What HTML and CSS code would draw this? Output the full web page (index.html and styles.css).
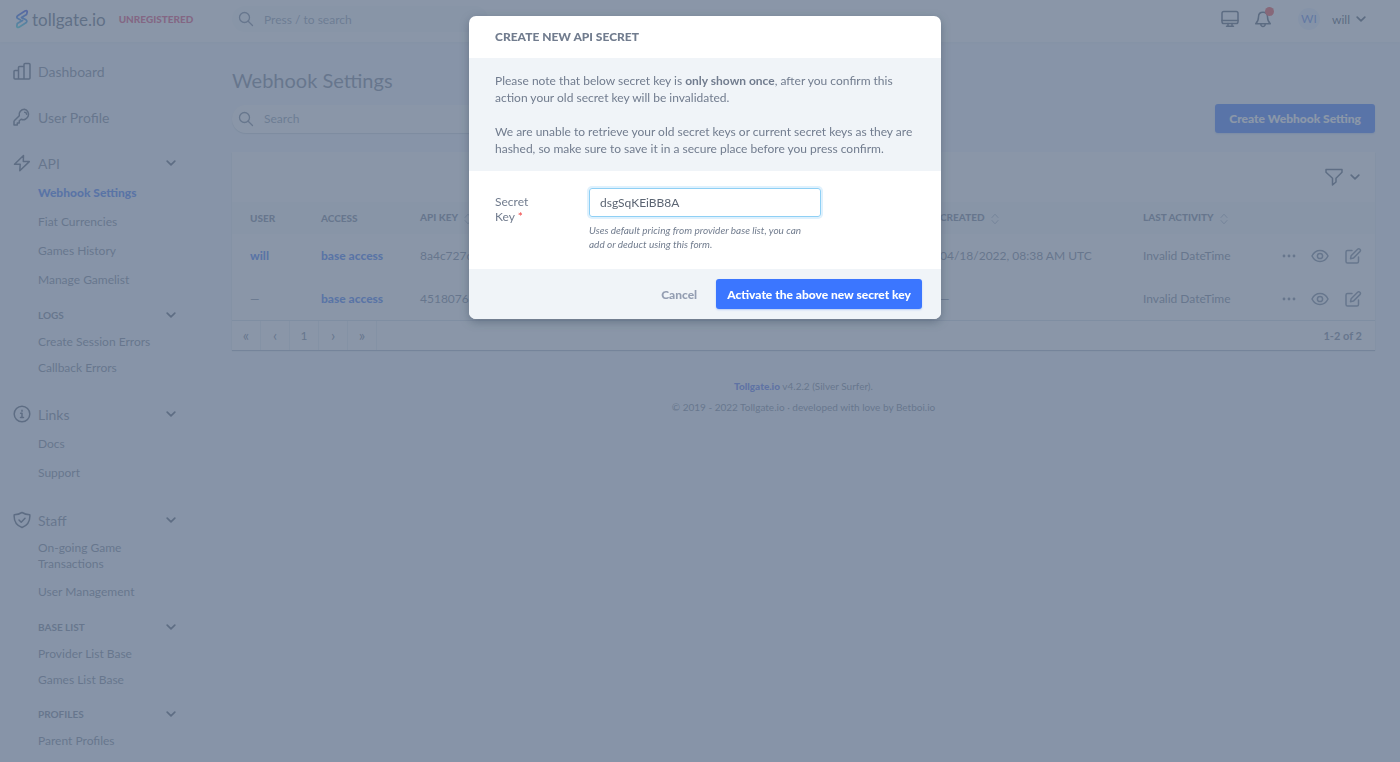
FILE: index.html
```html
<!DOCTYPE html>
<html lang="en">
<head>
    <meta charset="UTF-8">
    <meta name="viewport" content="width=device-width, initial-scale=1.0">
    <title>Webhook Settings</title>
    <link rel="stylesheet" href="styles.css">
</head>
<body>
    <!-- shared icons -->
    <svg class="sprite" aria-hidden="true">
        <symbol id="chevron" viewBox="0 0 10 10"><path d="M1.2 3.2 5 6.8l3.800-3.600"/></symbol>
        <symbol id="search" viewBox="0 0 16 16"><circle cx="6.500" cy="6.500" r="5"/><path d="m10.200 10.200 4.300 4.300"/></symbol>
        <symbol id="sort" viewBox="0 0 8 12"><path d="M1 4.500 4 1.200l3 3.300M1 7.500l3 3.300 3-3.300"/></symbol>
        <symbol id="dots" viewBox="0 0 14 6"><circle cx="2" cy="3" r="1.400"/><circle cx="7" cy="3" r="1.400"/><circle cx="12" cy="3" r="1.400"/></symbol>
        <symbol id="eye" viewBox="0 0 18 18"><path d="M1 9c1.800-3.700 4.600-5.500 8-5.500s6.200 1.800 8 5.500c-1.800 3.700-4.600 5.500-8 5.500S2.800 12.700 1 9z"/><circle cx="9" cy="9" r="2.600"/></symbol>
        <symbol id="edit" viewBox="0 0 18 18"><path d="M8 3.500H3.500a1.500 1.500 0 0 0-1.500 1.500v9.500A1.500 1.500 0 0 0 3.500 16H13a1.500 1.500 0 0 0 1.500-1.500V10M13.600 2.300a1.600 1.600 0 0 1 2.300 2.300L9.400 11.100l-2.900.6.600-2.900z"/></symbol>
    </svg>

    <header class="header">
        <div class="brand">
            <a href="#" class="logo">
                <svg width="14" height="20" viewBox="0 0 14 20">
                    <defs>
                        <linearGradient id="grad" x1="0" y1="0" x2="0" y2="1">
                            <stop offset="0" stop-color="#2f45e8"/>
                            <stop offset="0.5" stop-color="#2f7fe8"/>
                            <stop offset="1" stop-color="#30d4dc"/>
                        </linearGradient>
                    </defs>
                    <path stroke="url(#grad)" stroke-width="1.800" d="M5.500 11 2.500 9.300Q1 8 3 6.500L10 2q2.300-1 2.200 1l-.6 2.400L6.500 8.600 11 10.800q1.700 1.500 0 3L4 18.200q-2.200.8-2.200-1.200l.5-2.400 5.200-3.200"/>
                </svg>
                <span>tollgate.io</span>
            </a>
            <span class="unregistered">UNREGISTERED</span>
        </div>
        <label class="search top-search">
            <svg width="16" height="16"><use href="#search"/></svg>
            <input type="search" placeholder="Press / to search" aria-label="Press / to search">
        </label>
        <div class="tools">
            <button class="icon-btn" aria-label="Theme">
                <svg width="18" height="18" viewBox="0 0 18 18"><rect x="1" y="1.500" width="16" height="12" rx="1.800"/><path d="M1 10.500h16M7 13.500V16M11 13.500V16M5.500 16.300h7"/></svg>
            </button>
            <button class="icon-btn" aria-label="Notifications">
                <svg width="18" height="18" viewBox="0 0 18 18"><path d="M9 2.300c-3 0-4.500 2.200-4.500 4.700 0 3-.6 4.600-2.800 6.700h14.600c-2.200-2.100-2.800-3.700-2.800-6.700 0-2.500-1.500-4.700-4.500-4.700zM6.700 14c.2 1.600 1 2.500 2.300 2.500s2.100-.9 2.300-2.500"/></svg>
                <span class="dot"></span>
            </button>
            <button class="user">
                <span class="avatar">WI</span>
                <span>will</span>
                <svg width="10" height="10" class="bold"><use href="#chevron"/></svg>
            </button>
        </div>
    </header>

    <div class="layout">
        <nav class="sidebar">
            <div class="group">
                <a href="#" class="title">
                    <svg width="18" height="18" viewBox="0 0 18 18"><path d="M1 9.500a1 1 0 0 1 1-1h3.500V17H2a1 1 0 0 1-1-1zM5.500 5.500a1 1 0 0 1 1-1h4.500V17H5.500zM11 2.500a1 1 0 0 1 1-1h4a1 1 0 0 1 1 1V16a1 1 0 0 1-1 1h-5z"/></svg>
                    <span>Dashboard</span>
                </a>
            </div>
            <div class="group">
                <a href="#" class="title">
                    <svg width="18" height="18" viewBox="0 0 18 18"><path d="M11.500 1.200a5.300 5.300 0 0 0-5.200 6.500L1.500 12.500a1.500 1.500 0 0 0-.5 1V17h3.300v-2h2v-2.200l1.800-1.600a5.300 5.300 0 1 0 3.400-10zM11.700 4.300a2 2 0 0 1 1.900 1.900"/></svg>
                    <span>User Profile</span>
                </a>
            </div>
            <div class="group has-items">
                <button class="title">
                    <svg width="18" height="18" viewBox="0 0 18 18"><path d="M10.500 1.500 1.500 10.200h5.700L6.800 16.700 16.300 7.600h-6z"/></svg>
                    <span>API</span>
                    <svg width="10" height="10" class="bold"><use href="#chevron"/></svg>
                </button>
                <ul>
                    <li><a href="#" class="active">Webhook Settings</a></li>
                    <li><a href="#">Fiat Currencies</a></li>
                    <li><a href="#">Games History</a></li>
                    <li><a href="#">Manage Gamelist</a></li>
                </ul>
                <button class="subtitle"><span>LOGS</span><svg width="10" height="10" class="bold"><use href="#chevron"/></svg></button>
                <ul class="nested">
                    <li><a href="#">Create Session Errors</a></li>
                    <li><a href="#">Callback Errors</a></li>
                </ul>
            </div>
            <div class="group has-items">
                <button class="title">
                    <svg width="18" height="18" viewBox="0 0 18 18"><circle cx="9" cy="9" r="7.800"/><path d="M7.600 8.300H9V12.500M7.500 12.500h3M9 5.200v1"/></svg>
                    <span>Links</span>
                    <svg width="10" height="10" class="bold"><use href="#chevron"/></svg>
                </button>
                <ul>
                    <li><a href="#">Docs</a></li>
                    <li><a href="#">Support</a></li>
                </ul>
            </div>
            <div class="group has-items">
                <button class="title">
                    <svg width="18" height="18" viewBox="0 0 18 18"><path d="M9 1.500c-2.400 1.500-4.900 2.100-7.800 2.200-.5 6.300 2 10.600 7.800 12.800 5.800-2.200 8.300-6.500 7.800-12.800C13.900 3.600 11.400 3 9 1.500zM6 9l2.200 2.200L12 7.200"/></svg>
                    <span>Staff</span>
                    <svg width="10" height="10" class="bold"><use href="#chevron"/></svg>
                </button>
                <ul>
                    <li><a href="#" class="long">On-going Game Transactions</a></li>
                    <li><a href="#">User Management</a></li>
                </ul>
                <button class="subtitle"><span>BASE LIST</span><svg width="10" height="10" class="bold"><use href="#chevron"/></svg></button>
                <ul class="nested">
                    <li><a href="#">Provider List Base</a></li>
                    <li><a href="#">Games List Base</a></li>
                </ul>
                <button class="subtitle"><span>PROFILES</span><svg width="10" height="10" class="bold"><use href="#chevron"/></svg></button>
                <ul class="nested">
                    <li><a href="#">Parent Profiles</a></li>
                </ul>
            </div>
        </nav>

        <main class="content">
            <h1>Webhook Settings</h1>
            <div class="actions">
                <label class="search">
                    <svg width="16" height="16"><use href="#search"/></svg>
                    <input type="search" placeholder="Search" aria-label="Search">
                </label>
                <button class="btn">Create Webhook Setting</button>
            </div>

            <section class="card">
                <div class="toolbar">
                    <button class="icon-btn filter" aria-label="Filter">
                        <svg width="18" height="18" viewBox="0 0 18 18"><path d="M1 1.500h16v2.800l-6 6v3.700L7.500 17v-6.700L1 4.300z"/></svg>
                        <svg width="10" height="10" class="bold"><use href="#chevron"/></svg>
                    </button>
                </div>
                <table>
                    <thead>
                        <tr>
                            <th class="col-user">USER</th>
                            <th class="col-access">ACCESS</th>
                            <th>API KEY <svg width="8" height="12"><use href="#sort"/></svg></th>
                            <th class="col-created">CREATED <svg width="8" height="12"><use href="#sort"/></svg></th>
                            <th class="col-last">LAST ACTIVITY <svg width="8" height="12"><use href="#sort"/></svg></th>
                            <th class="col-tools"></th>
                        </tr>
                    </thead>
                    <tbody>
                        <tr>
                            <td><a href="#">will</a></td>
                            <td><a href="#">base access</a></td>
                            <td>8a4c727c</td>
                            <td>04/18/2022, 08:38 AM UTC</td>
                            <td>Invalid DateTime</td>
                            <td>
                                <div class="row-tools">
                                    <button class="icon-btn" aria-label="More"><svg width="14" height="6" class="dots"><use href="#dots"/></svg></button>
                                    <button class="icon-btn" aria-label="View"><svg width="18" height="18"><use href="#eye"/></svg></button>
                                    <button class="icon-btn" aria-label="Edit"><svg width="18" height="18"><use href="#edit"/></svg></button>
                                </div>
                            </td>
                        </tr>
                        <tr>
                            <td>—</td>
                            <td><a href="#">base access</a></td>
                            <td>4518076</td>
                            <td>—</td>
                            <td>Invalid DateTime</td>
                            <td>
                                <div class="row-tools">
                                    <button class="icon-btn" aria-label="More"><svg width="14" height="6" class="dots"><use href="#dots"/></svg></button>
                                    <button class="icon-btn" aria-label="View"><svg width="18" height="18"><use href="#eye"/></svg></button>
                                    <button class="icon-btn" aria-label="Edit"><svg width="18" height="18"><use href="#edit"/></svg></button>
                                </div>
                            </td>
                        </tr>
                    </tbody>
                </table>
                <div class="pagination">
                    <div class="pages">
                        <button class="arrow">«</button>
                        <button class="arrow">‹</button>
                        <button>1</button>
                        <button class="arrow">›</button>
                        <button class="arrow">»</button>
                    </div>
                    <span class="count">1-2 of 2</span>
                </div>
            </section>

            <footer class="footer">
                <p><a href="#">Tollgate.io</a> v4.2.2 (Silver Surfer).</p>
                <p>© 2019 - 2022 Tollgate.io · developed with love by Betboi.io</p>
            </footer>
        </main>
    </div>

    <div class="overlay">
        <form class="modal" role="dialog" aria-labelledby="modal-title">
            <h2 id="modal-title">CREATE NEW API SECRET</h2>
            <div class="note">
                <p>Please note that below secret key is <b>only shown once</b>, after you confirm this action your old secret key will be invalidated.</p>
                <p>We are unable to retrieve your old secret keys or current secret keys as they are hashed, so make sure to save it in a secure place before you press confirm.</p>
            </div>
            <div class="field">
                <label for="secret">Secret Key <span class="required">*</span></label>
                <div class="control">
                    <input type="text" id="secret" value="dsgSqKEiBB8A">
                    <p class="help">Uses default pricing from provider base list, you can add or deduct using this form.</p>
                </div>
            </div>
            <div class="modal-footer">
                <button type="button" class="cancel">Cancel</button>
                <button type="submit" class="btn">Activate the above new secret key</button>
            </div>
        </form>
    </div>
</body>
</html>
```
FILE: styles.css
```css
*{
    box-sizing: border-box;
    margin: 0;
    padding: 0;
}
body{
    min-height: 100vh;
    overflow: hidden;
    background: #eff3fd;
    color: #6f7e95;
    font-family: Lato, "Open Sans", sans-serif;
    font-size: 12px;
}
a{
    color: inherit;
    text-decoration: none;
}
ul{
    list-style: none;
}
button, input{
    border: 0;
    background: none;
    color: inherit;
    font: inherit;
}
button{
    cursor: pointer;
}
svg{
    flex: none;
    fill: none;
    stroke: currentColor;
    stroke-width: 1.5;
    stroke-linecap: round;
    stroke-linejoin: round;
}
.bold{
    stroke-width: 1.7;
}
.sprite{
    display: none;
}

/* header */
.header{
    display: flex;
    align-items: center;
    height: 42px;
    padding: 0 34px 4px 0;
    background: #fbfcfd;
    box-shadow: 0 1px 3px #e4eaf3;
}
.brand{
    display: flex;
    align-items: center;
    gap: 13px;
    width: 232px;
    padding-left: 15px;
}
.logo{
    display: flex;
    align-items: center;
    gap: 3px;
    color: #55637a;
    font-size: 17px;
}
.unregistered{
    color: #e04070;
    font-size: 10px;
    font-weight: 900;
}
.search{
    display: flex;
    align-items: center;
    gap: 10px;
    width: 256px;
    height: 28px;
    padding-left: 6px;
    border-radius: 14px;
    background: #fbfcfd;
    box-shadow: 0 1px 1px #c6d0dd;
}
.search svg{
    stroke-width: 1.3;
}
.search input{
    flex: 1;
    min-width: 0;
    outline: 0;
}
.search input::placeholder{
    color: #8796ad;
}
.top-search{
    height: 26px;
    background: #f3f6fb;
    box-shadow: none;
}
.tools{
    display: flex;
    align-items: center;
    gap: 15px;
    margin-left: auto;
    color: #45536a;
}
.icon-btn{
    display: flex;
    align-items: center;
    position: relative;
}
.dot{
    position: absolute;
    top: -3px;
    right: -2px;
    width: 9px;
    height: 9px;
    border-radius: 50%;
    background: #ef4444;
}
.user{
    display: flex;
    align-items: center;
    gap: 6px;
    padding-left: 11px;
}
.avatar{
    width: 22px;
    margin-right: 6px;
    border-radius: 50%;
    background: #e6eefd;
    color: #5c85ea;
    line-height: 22px;
}

/* sidebar */
.layout{
    display: flex;
}
.sidebar{
    display: flex;
    flex-direction: column;
    gap: 16px;
    width: 206px;
    padding: 14px 30px 0 13px;
}
.title{
    display: flex;
    align-items: center;
    gap: 7px;
    width: 100%;
    height: 30px;
    font-size: 14px;
    text-align: left;
}
.title span, .subtitle span{
    flex: 1;
}
.title svg, .subtitle svg{
    color: #4c5a70;
}
.has-items{
    padding-bottom: 2px;
}
.group ul a{
    display: block;
    padding-left: 25px;
    line-height: 29px;
}
.group ul .active{
    color: #3b76f6;
    font-weight: 900;
}
.group ul .long{
    width: 130px;
    padding-top: 5px;
    padding-bottom: 5px;
    line-height: 16px;
}
.group .nested a{
    line-height: 26px;
}
.subtitle{
    display: flex;
    align-items: center;
    width: 100%;
    height: 28px;
    margin-top: 7px;
    padding-left: 25px;
    font-size: 10px;
    font-weight: 700;
    text-align: left;
}

/* content */
.content{
    flex: 1;
    min-width: 0;
    padding: 24px 25px 0 26px;
}
h1{
    font-size: 20px;
    font-weight: 400;
    line-height: 28px;
}
.actions{
    display: flex;
    align-items: center;
    justify-content: space-between;
    margin: 10px 0 19px;
}
.btn{
    height: 30px;
    padding: 0 11px;
    border-radius: 3px;
    background: #3b76ff;
    box-shadow: 0 1px 2px #b9cdf5;
    color: #fff;
    font-weight: 900;
}
.actions .btn{
    height: 29px;
    padding: 0 14px;
}
.card{
    background: #fbfcfd;
    box-shadow: 0 1px 1px #a9b5c6;
}
.toolbar{
    display: flex;
    align-items: center;
    justify-content: flex-end;
    height: 50px;
    padding-right: 15px;
}
.filter{
    gap: 7px;
    color: #4c5a70;
}
table{
    width: 100%;
    border-collapse: collapse;
    table-layout: fixed;
}
th, td{
    padding-left: 18px;
    text-align: left;
    white-space: nowrap;
}
th{
    height: 32px;
    background: #f3f7fb;
    font-size: 10px;
    font-weight: 900;
}
th svg{
    margin-left: 4px;
    color: #a3b1c4;
    stroke-width: 1;
    vertical-align: middle;
}
td{
    height: 43px;
}
td a{
    color: #3b76f6;
    font-weight: 900;
}
.col-user{
    width: 71px;
}
.col-access{
    width: 99px;
}
.col-created{
    width: 203px;
}
.col-last{
    width: 124px;
}
.col-tools{
    width: 126px;
}
.row-tools{
    display: flex;
    align-items: center;
    justify-content: flex-end;
    gap: 15px;
    padding-right: 13px;
}
.dots{
    fill: currentColor;
    stroke: none;
}
.pagination{
    display: flex;
    align-items: center;
    justify-content: space-between;
    padding-right: 13px;
    border-top: 1px solid #d0d9e5;
}
.pages{
    display: flex;
}
.pages button{
    width: 29px;
    height: 29px;
    border-right: 1px solid #e3e9f1;
}
.pages .arrow{
    padding-bottom: 2px;
    font-size: 15px;
}
.count{
    font-size: 11px;
    font-weight: 700;
}
.footer{
    padding-top: 26px;
    font-size: 10px;
    line-height: 21px;
    text-align: center;
}
.footer a{
    color: #4f6ff0;
    font-weight: 900;
}

/* modal */
.overlay{
    position: fixed;
    inset: 0;
    display: flex;
    align-items: flex-start;
    justify-content: center;
    padding: 16px 0 0 10px;
    background: rgba(100, 116, 139, .75);
}
.modal{
    width: 472px;
    max-width: 100%;
    overflow: hidden;
    border-radius: 7px;
    background: #fff;
    box-shadow: 0 3px 10px rgba(51, 65, 85, .4);
    color: #717c8e;
}
.modal h2{
    padding: 0 26px;
    font-size: 12px;
    font-weight: 900;
    line-height: 42px;
}
.note{
    padding: 14px 26px;
    background: #f0f4f8;
    line-height: 17px;
}
.note p + p{
    margin-top: 17px;
}
.field{
    display: grid;
    grid-template-columns: 40px 232px;
    gap: 54px;
    padding: 17px 26px 18px;
}
.field label{
    padding-top: 6px;
    line-height: 15px;
}
.required{
    color: #ef4444;
}
.control input{
    width: 100%;
    height: 29px;
    padding: 0 10px;
    border: 1px solid #8fd0f5;
    border-radius: 3px;
    box-shadow: 0 0 0 2px #dff1fd;
    outline: 0;
    color: #5b6472;
}
.help{
    margin-top: 6px;
    padding-right: 12px;
    font-size: 10px;
    font-style: italic;
    line-height: 14px;
}
.modal-footer{
    display: flex;
    align-items: center;
    justify-content: flex-end;
    gap: 19px;
    padding: 10px 19px;
    background: #f0f4f8;
}
.cancel{
    color: #949eb2;
    font-weight: 900;
}
```
